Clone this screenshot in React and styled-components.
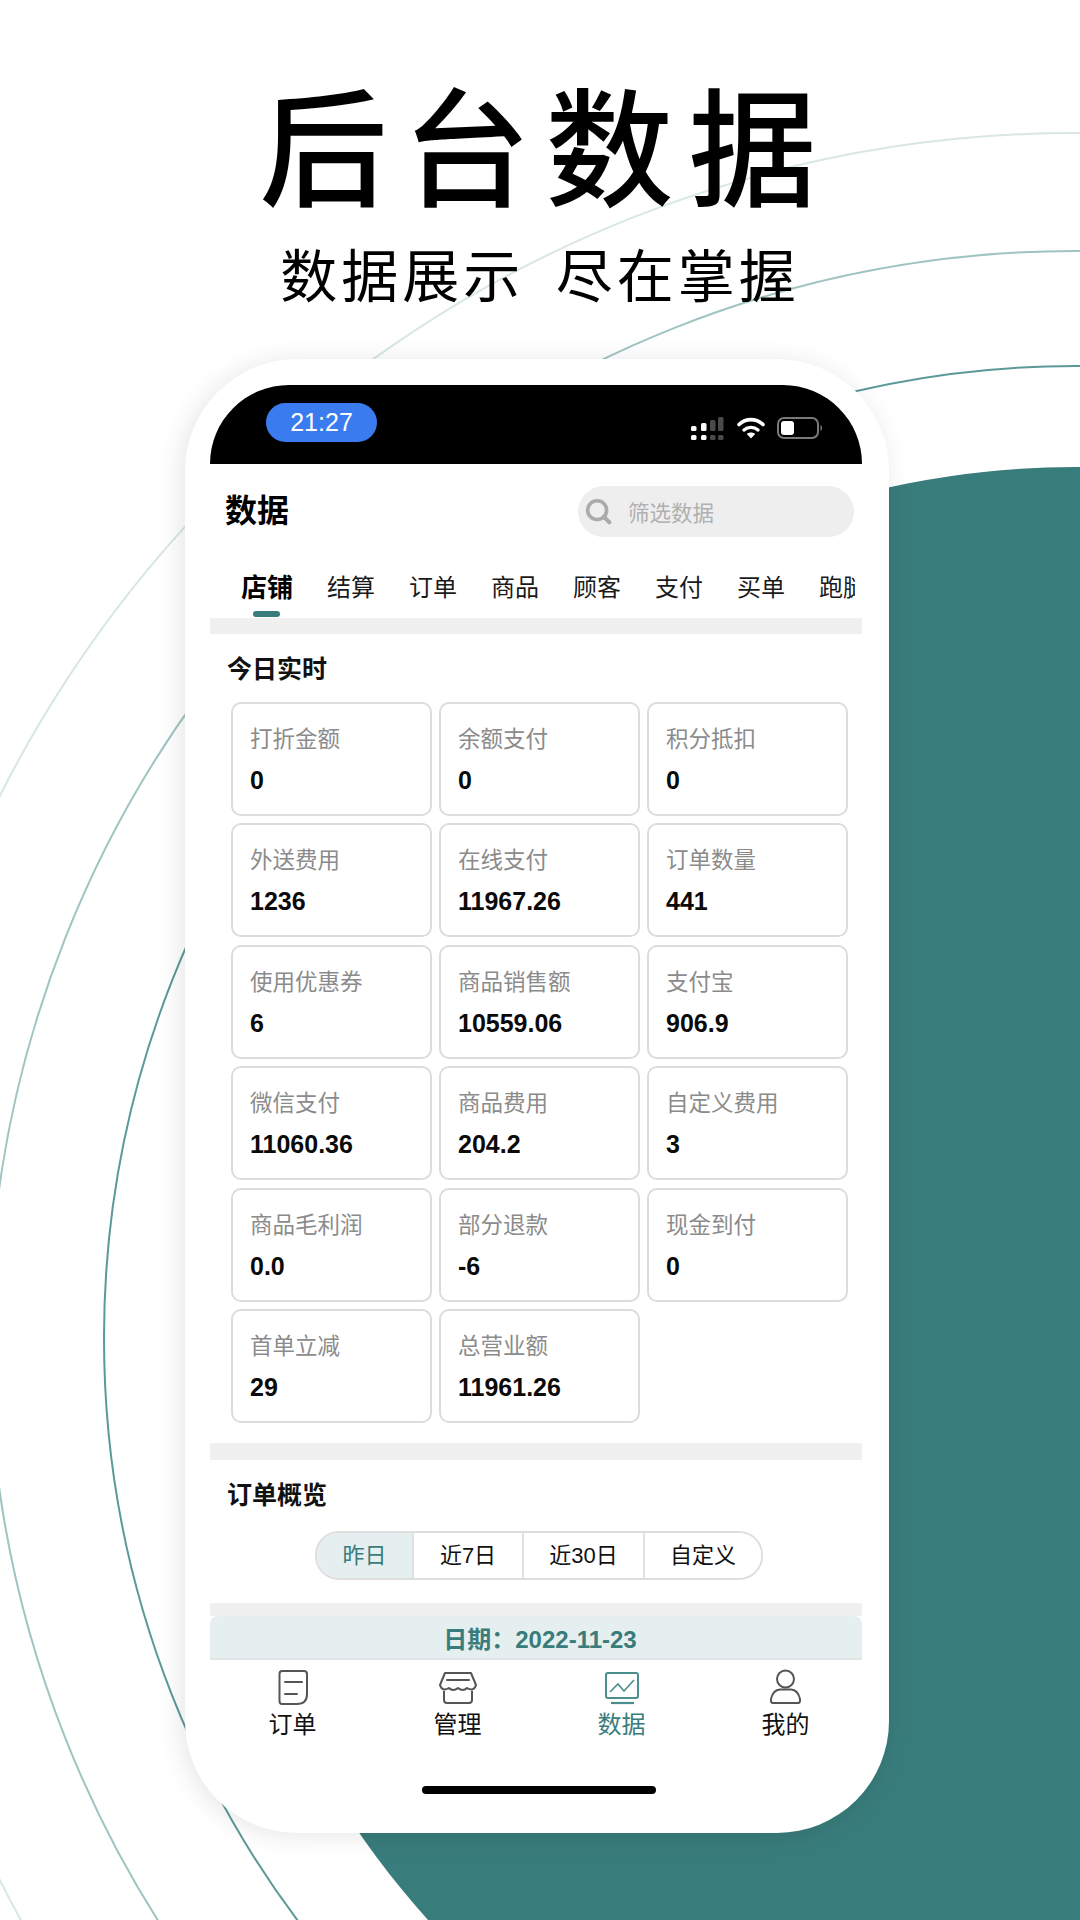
import React from 'react';
import styled, { createGlobalStyle } from 'styled-components';

const TEAL = '#387c7b';
const FONT = '"Liberation Sans", "Noto Sans CJK SC", sans-serif';

const GlobalStyle = createGlobalStyle`
  html, body {
    margin: 0;
    padding: 0;
    background: #fff;
  }
  * {
    box-sizing: border-box;
  }
`;

const Page = styled.div`
  position: relative;
  width: 1080px;
  height: 1920px;
  overflow: hidden;
  background: #fff;
  font-family: ${FONT};
  color: #000;
`;

// all circles share one centre at (1076, 1338)
const Ring = styled.div`
  position: absolute;
  left: ${(p) => 1076 - p.$r}px;
  top: ${(p) => 1338 - p.$r}px;
  width: ${(p) => p.$r * 2}px;
  height: ${(p) => p.$r * 2}px;
  border-radius: 50%;
  border: ${(p) => (p.$fill ? 'none' : `2.5px solid ${p.$color}`)};
  background: ${(p) => (p.$fill ? p.$color : 'transparent')};
`;

const Header = styled.header`
  position: relative;
  height: 359px;
  padding-top: 78px;
  text-align: center;
`;

const Title = styled.h1`
  margin: 0;
  font-size: 128px;
  line-height: 150px;
  font-weight: 500;
  letter-spacing: 15px;
  padding-left: 11px;
`;

const Subtitle = styled.h2`
  margin: 16px 0 0;
  font-size: 57px;
  line-height: 66px;
  font-weight: 400;
  letter-spacing: 4px;
  word-spacing: -4px;
  white-space: pre;
`;

const Phone = styled.div`
  position: relative;
  width: 704px;
  height: 1474px;
  margin-left: 185px;
  padding: 26px 27px 0 25px;
  border-radius: 112px;
  background: #fff;
  box-shadow: -4px 2px 26px rgba(0, 0, 0, 0.1);
`;

const StatusBar = styled.div`
  display: flex;
  align-items: flex-start;
  justify-content: space-between;
  height: 79px;
  padding: 18px 39px 0 56px;
  background: #000;
  border-radius: 84px 84px 0 0;
`;

const TimePill = styled.div`
  width: 111px;
  height: 39px;
  border-radius: 20px;
  background: #3a7cf0;
  color: #fff;
  font-size: 25px;
  line-height: 39px;
  text-align: center;
`;

const StatusIcons = styled.div`
  display: flex;
  align-items: flex-start;
  gap: 12px;
  margin-top: 14px;
`;

const TopRow = styled.div`
  display: flex;
  align-items: center;
  justify-content: space-between;
  padding: 22px 8px 0 15px;
`;

const PageName = styled.div`
  font-size: 32px;
  line-height: 51px;
  font-weight: 700;
`;

const SearchBox = styled.div`
  display: flex;
  align-items: center;
  gap: 16px;
  width: 276px;
  height: 51px;
  padding-left: 7px;
  border-radius: 26px;
  background: #eeeeee;
  color: #b0b0b0;
  font-size: 21.5px;
`;

const TabRow = styled.div`
  display: flex;
  gap: 34px;
  width: 645px;
  height: 81px;
  padding: 38px 0 0 31px;
  overflow: hidden;
  white-space: nowrap;
`;

const Tab = styled.div`
  position: relative;
  flex: none;
  height: 26px;
  font-size: ${(p) => (p.$active ? '26px' : '24px')};
  font-weight: ${(p) => (p.$active ? 700 : 400)};
  line-height: 26px;
  color: ${(p) => (p.$active ? '#000' : '#1a1a1a')};
`;

const TabMark = styled.span`
  position: absolute;
  left: 12px;
  top: 36px;
  width: 27px;
  height: 6px;
  border-radius: 3px;
  background: ${TEAL};
`;

const Band = styled.div`
  height: ${(p) => p.$h}px;
  background: #f0f0f0;
`;

const SectionTitle = styled.div`
  padding: 22px 0 0 17px;
  font-size: 25px;
  line-height: 26px;
  font-weight: 700;
  color: #111;
`;

const CardGrid = styled.div`
  display: grid;
  grid-template-columns: repeat(3, 201px);
  grid-auto-rows: 114px;
  column-gap: 7px;
  row-gap: 7.4px;
  padding: 20px 0 20px 21px;
`;

const Card = styled.div`
  padding: 24px 0 0 17px;
  border: 2px solid #dcdcdc;
  border-radius: 10px;
  background: #fff;
`;

const CardLabel = styled.div`
  font-size: 22.5px;
  line-height: 24px;
  color: #8b8b8b;
`;

const CardValue = styled.div`
  margin-top: 16px;
  font-size: 25px;
  line-height: 24px;
  font-weight: 700;
  color: #0a0a0a;
`;

const Segment = styled.div`
  display: flex;
  width: 448px;
  height: 49px;
  margin: 23px 0 23px 105px;
  border: 2px solid #dedede;
  border-radius: 24px;
  overflow: hidden;
`;

const SegmentItem = styled.div`
  width: ${(p) => p.$w}px;
  flex: none;
  border-left: ${(p) => (p.$first ? 'none' : '2px solid #e2e2e2')};
  background: ${(p) => (p.$active ? '#e6efef' : '#fff')};
  color: ${(p) => (p.$active ? TEAL : '#111')};
  font-size: 22px;
  line-height: 45px;
  text-align: center;
`;

const DateBar = styled.div`
  height: 44px;
  padding: 2px 0 0 8px;
  border-radius: 8px 8px 0 0;
  border-bottom: 2px solid #dfe5e5;
  background: #e6efef;
  color: ${TEAL};
  font-size: 24px;
  font-weight: 700;
  line-height: 43px;
  text-align: center;
`;

const BottomNav = styled.nav`
  display: grid;
  grid-template-columns: 165px 165px 163px 165px;
  padding-top: 8px;
`;

const NavItem = styled.div`
  display: flex;
  flex-direction: column;
  align-items: center;
  color: ${(p) => (p.$active ? TEAL : '#111')};
  font-size: 24px;
  line-height: 26px;
`;

const NavIcon = styled.svg`
  display: block;
  width: 40px;
  height: 40px;
  margin-bottom: 4px;
`;

const HomeBar = styled.div`
  width: 234px;
  height: 8px;
  margin: 48px 0 0 212px;
  border-radius: 4px;
  background: #000;
`;

const tabs = ['结算', '订单', '商品', '顾客', '支付', '买单', '跑腿'];

const cards = [
  ['打折金额', '0'],
  ['余额支付', '0'],
  ['积分抵扣', '0'],
  ['外送费用', '1236'],
  ['在线支付', '11967.26'],
  ['订单数量', '441'],
  ['使用优惠券', '6'],
  ['商品销售额', '10559.06'],
  ['支付宝', '906.9'],
  ['微信支付', '11060.36'],
  ['商品费用', '204.2'],
  ['自定义费用', '3'],
  ['商品毛利润', '0.0'],
  ['部分退款', '-6'],
  ['现金到付', '0'],
  ['首单立减', '29'],
  ['总营业额', '11961.26'],
];

const ranges = [
  ['昨日', 95],
  ['近7日', 110],
  ['近30日', 121],
  ['自定义', 118],
];

const SignalIcon = () => (
  <svg width="34" height="24" viewBox="0 0 34 24">
    <rect x="0" y="9" width="5.500" height="5" rx="1.500" fill="#fff" />
    <rect x="0" y="18" width="5.500" height="5" rx="1.500" fill="#fff" />
    <rect x="10" y="6" width="5.500" height="8" rx="1.500" fill="#fff" />
    <rect x="10" y="18" width="5.500" height="5" rx="1.500" fill="#fff" />
    <rect x="19" y="3" width="5.500" height="11" rx="1.500" fill="#4a4a4a" />
    <rect x="19" y="18" width="5.500" height="5" rx="1.500" fill="#4a4a4a" />
    <rect x="27" y="0" width="5.500" height="14" rx="1.500" fill="#4a4a4a" />
    <rect x="27" y="18" width="5.500" height="5" rx="1.500" fill="#4a4a4a" />
  </svg>
);

const WifiIcon = () => (
  <svg width="28" height="22" viewBox="0 0 28 22">
    <path d="M2 7.500 C9 1 19 1 26 7.500" fill="none" stroke="#fff" strokeWidth="3.600" strokeLinecap="round" />
    <path d="M7 13 C11 9.500 17 9.500 21 13" fill="none" stroke="#fff" strokeWidth="3.400" strokeLinecap="round" />
    <path d="M14 21.500 L9.800 17 C12 15 16 15 18.200 17 Z" fill="#fff" />
  </svg>
);

const BatteryIcon = () => (
  <svg width="46" height="22" viewBox="0 0 46 22">
    <rect x="1" y="1" width="40" height="20" rx="6" fill="none" stroke="#7a7a7a" strokeWidth="2" />
    <rect x="4" y="4" width="13" height="14" rx="3" fill="#fff" />
    <path d="M43.500 8 C45.500 8.600 45.500 13.400 43.500 14 Z" fill="#7a7a7a" />
  </svg>
);

const SearchIcon = () => (
  <svg width="27" height="27" viewBox="0 0 30 30">
    <circle cx="13.500" cy="13.500" r="10.500" fill="none" stroke="#ababab" strokeWidth="4" />
    <path d="M21 21 L27 27" stroke="#ababab" strokeWidth="4.500" strokeLinecap="round" />
  </svg>
);

const OrderIcon = () => (
  <NavIcon viewBox="0 0 40 40">
    <path
      d="M9 3 H31 Q34 3 34 6 V26 Q34 36 24 36 H9 Q6.500 36 6.500 33 V6 Q6.500 3 9 3 Z"
      fill="none"
      stroke="#555"
      strokeWidth="2"
    />
    <path d="M12 14 H29 M12 26 H24" stroke="#555" strokeWidth="2" strokeLinecap="round" fill="none" />
  </NavIcon>
);

const ShopIcon = () => (
  <NavIcon viewBox="0 0 40 40">
    <path
      d="M7 5 H33 L38 17 Q36 24 29 20 Q25 24 20 20 Q15 24 11 20 Q4 24 2 17 Z"
      fill="none"
      stroke="#555"
      strokeWidth="2"
      strokeLinejoin="round"
    />
    <path d="M9 12 H31" stroke="#555" strokeWidth="2" strokeLinecap="round" />
    <path d="M6 23 V32 Q6 35 9 35 H31 Q34 35 34 32 V23" fill="none" stroke="#555" strokeWidth="2" />
  </NavIcon>
);

const ChartIcon = () => (
  <NavIcon viewBox="0 0 40 40">
    <rect x="4" y="5" width="32" height="25" rx="2" fill="none" stroke="#4a8f8d" strokeWidth="2" />
    <path d="M8 24 L16 16 L22 23 L32 12" fill="none" stroke="#4a8f8d" strokeWidth="1.600" />
    <path d="M9 35 H32" stroke="#4a8f8d" strokeWidth="2.200" />
  </NavIcon>
);

const PersonIcon = () => (
  <NavIcon viewBox="0 0 40 40">
    <circle cx="19.500" cy="11" r="8.500" fill="none" stroke="#555" strokeWidth="2" />
    <path
      d="M7 35 Q4.500 35 5 31 Q7 22 14 21.500 H25 Q32 22 34 31 Q34.500 35 32 35 Z"
      fill="none"
      stroke="#555"
      strokeWidth="2"
    />
  </NavIcon>
);

const App = () => (
  <Page>
    <GlobalStyle />
    <Ring $r={1206} $color="#d8e7e5" />
    <Ring $r={1088} $color="#9fc4c1" />
    <Ring $r={973} $color="#5c9a97" />
    <Ring $r={871} $color={TEAL} $fill />

    <Header>
      <Title>后台数据</Title>
      <Subtitle>数据展示  尽在掌握</Subtitle>
    </Header>

    <Phone>
      <StatusBar>
        <TimePill>21:27</TimePill>
        <StatusIcons>
          <SignalIcon />
          <WifiIcon />
          <BatteryIcon />
        </StatusIcons>
      </StatusBar>

      <TopRow>
        <PageName>数据</PageName>
        <SearchBox>
          <SearchIcon />
          筛选数据
        </SearchBox>
      </TopRow>

      <TabRow>
        <Tab $active>
          店铺
          <TabMark />
        </Tab>
        {tabs.map((t) => (
          <Tab key={t}>{t}</Tab>
        ))}
      </TabRow>
      <Band $h={16} />

      <SectionTitle>今日实时</SectionTitle>
      <CardGrid>
        {cards.map(([label, value]) => (
          <Card key={label}>
            <CardLabel>{label}</CardLabel>
            <CardValue>{value}</CardValue>
          </Card>
        ))}
      </CardGrid>
      <Band $h={17} />

      <SectionTitle>订单概览</SectionTitle>
      <Segment>
        {ranges.map(([label, w], i) => (
          <SegmentItem key={label} $w={w} $first={i === 0} $active={i === 0}>
            {label}
          </SegmentItem>
        ))}
      </Segment>
      <Band $h={13} />
      <DateBar>日期：2022-11-23</DateBar>

      <BottomNav>
        <NavItem>
          <OrderIcon />
          订单
        </NavItem>
        <NavItem>
          <ShopIcon />
          管理
        </NavItem>
        <NavItem $active>
          <ChartIcon />
          数据
        </NavItem>
        <NavItem>
          <PersonIcon />
          我的
        </NavItem>
      </BottomNav>
      <HomeBar />
    </Phone>
  </Page>
);

export default App;
